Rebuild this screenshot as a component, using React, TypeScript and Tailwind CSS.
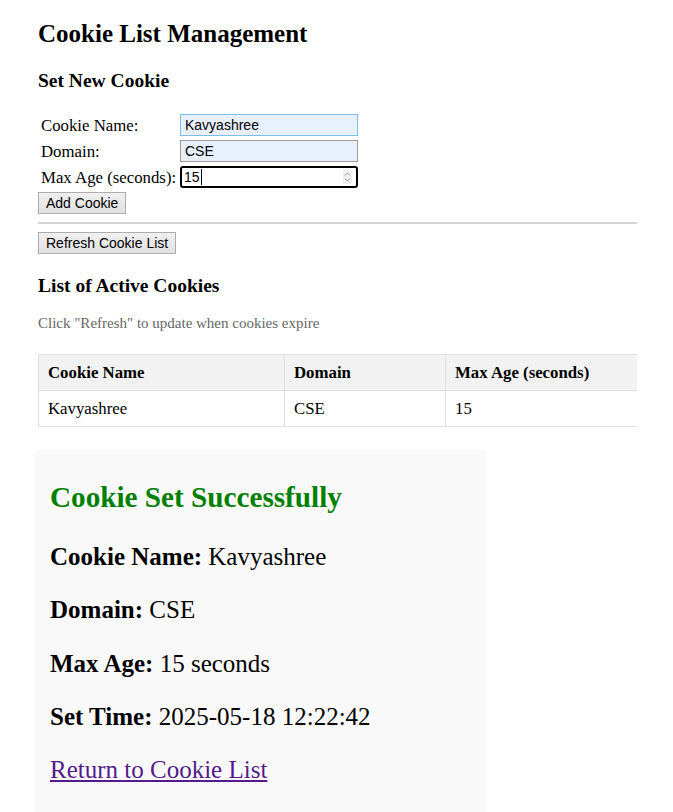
import React from 'react';

const rows = [
  { label: 'Cookie Name:', value: 'Kavyashree', kind: 'auto-focus' },
  { label: 'Domain:', value: 'CSE', kind: 'auto' },
  { label: 'Max Age (seconds):', value: '15', kind: 'number' },
];

const cookies = [{ name: 'Kavyashree', domain: 'CSE', maxAge: '15' }];

const Spinner: React.FC = () => (
  <div className="flex h-[14px] w-[9px] flex-col items-center justify-center bg-[#efefef]">
    <svg width="7" height="12" viewBox="0 0 7 12" fill="none" stroke="#9a9a9a" strokeWidth="1">
      <path d="M1 4.5 L3.5 2 L6 4.5" />
      <path d="M1 7.5 L3.5 10 L6 7.5" />
    </svg>
  </div>
);

const FormField: React.FC<{ value: string; kind: string }> = ({ value, kind }) => {
  if (kind === 'number') {
    return (
      <div className="flex h-[22px] w-[178px] items-center rounded-[3px] border-2 border-black bg-white pl-[2px] pr-[4px] font-['Liberation_Sans',Arial,sans-serif] text-[14px] text-black">
        <span>{value}</span>
        <span className="ml-px h-[16px] w-px bg-black" />
        <div className="ml-auto">
          <Spinner />
        </div>
      </div>
    );
  }
  return (
    <input
      readOnly
      value={value}
      className={`h-[22px] w-[178px] border px-[4px] font-['Liberation_Sans',Arial,sans-serif] text-[14px] text-black outline-none bg-[#e8f0fe] ${
        kind === 'auto-focus' ? 'border-[#7cc0ea]' : 'border-[#9c9c9c]'
      }`}
    />
  );
};

const Button: React.FC<{ children: React.ReactNode }> = ({ children }) => (
  <button className="h-[22px] border border-[#adadad] bg-gradient-to-b from-[#f0f0f0] to-[#e1e1e1] px-[7px] font-['Liberation_Sans',Arial,sans-serif] text-[14px] leading-[20px] text-black">
    {children}
  </button>
);

export default function App() {
  return (
    <div className="min-h-[812px] w-full overflow-hidden bg-white font-['Liberation_Serif','Times_New_Roman',serif] text-black">
      <div className="w-[637px] pl-[38px] pt-[19px]">
        <h1 className="text-[25px] font-bold leading-[29px]">Cookie List Management</h1>
        <h3 className="mt-[21px] text-[19.5px] font-bold leading-[23px]">Set New Cookie</h3>

        {/* Form */}
        <div className="mt-[22px] flex flex-col gap-[4px]">
          {rows.map((row) => (
            <div key={row.label} className="flex items-center">
              <span className="w-[142px] pl-[3px] text-[16.8px] leading-[19px]">{row.label}</span>
              <FormField value={row.value} kind={row.kind} />
            </div>
          ))}
        </div>
        <div className="mt-[4px] flex">
          <Button>Add Cookie</Button>
        </div>

        <div className="mt-[8px] h-[2px] bg-[#d4d4d4]" />

        <div className="mt-[8px] flex">
          <Button>Refresh Cookie List</Button>
        </div>

        <h3 className="mt-[20px] text-[19.5px] font-bold leading-[23px]">List of Active Cookies</h3>
        <p className="mt-[18px] text-[15px] leading-[17px] text-[#666]">
          Click "Refresh" to update when cookies expire
        </p>

        {/* Cookie table */}
        <table className="mt-[22px] w-[599px] border-collapse text-left text-[16.8px] leading-[19px]">
          <thead>
            <tr className="bg-[#f2f2f2]">
              <th className="h-[36px] w-[246px] border border-[#e0e0e0] pl-[9px] font-bold">Cookie Name</th>
              <th className="h-[36px] w-[161px] border border-[#e0e0e0] pl-[9px] font-bold">Domain</th>
              <th className="h-[36px] border border-r-0 border-[#e0e0e0] pl-[9px] font-bold">Max Age (seconds)</th>
            </tr>
          </thead>
          <tbody>
            {cookies.map((c) => (
              <tr key={c.name}>
                <td className="h-[36px] border border-[#e0e0e0] pl-[9px]">{c.name}</td>
                <td className="h-[36px] border border-[#e0e0e0] pl-[9px]">{c.domain}</td>
                <td className="h-[36px] border border-r-0 border-[#e0e0e0] pl-[9px]">{c.maxAge}</td>
              </tr>
            ))}
          </tbody>
        </table>
      </div>

      {/* Success panel */}
      <div className="ml-[35px] mt-[23px] w-[451px] bg-[#f9f9f9] pb-[40px] pl-[15px] pt-[30px]">
        <h2 className="text-[29.2px] font-bold leading-[35px] text-[#008000]">Cookie Set Successfully</h2>
        <div className="mt-[28px] flex flex-col gap-[25px] text-[25px] leading-[28.3px]">
          <p>
            <strong>Cookie Name:</strong> Kavyashree
          </p>
          <p>
            <strong>Domain:</strong> CSE
          </p>
          <p>
            <strong>Max Age:</strong> 15 seconds
          </p>
          <p>
            <strong>Set Time:</strong> 2025-05-18 12:22:42
          </p>
          <p>
            <a href="#" className="text-[#551a8b] underline">
              Return to Cookie List
            </a>
          </p>
        </div>
      </div>
    </div>
  );
}
